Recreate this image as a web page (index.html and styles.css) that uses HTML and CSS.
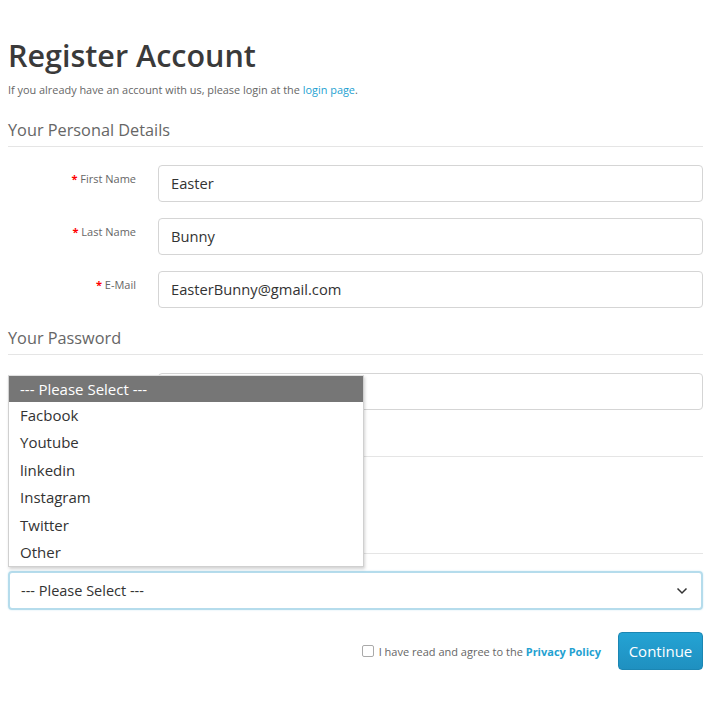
FILE: index.html
```html
<!DOCTYPE html>
<html>
<head>
<meta charset="utf-8">
<link rel="stylesheet" href="styles.css">
</head>
<body>
<div class="page">
  <h1 class="title">Register Account</h1>
  <p class="intro">If you already have an account with us, please login at the <a class="link" href="#">login page</a>.</p>

  <div class="legend legend-first">Your Personal Details</div>
  <div class="rows">
    <div class="row">
      <label class="label"><span class="req">*</span> First Name</label>
      <div class="input">Easter</div>
    </div>
    <div class="row">
      <label class="label"><span class="req">*</span> Last Name</label>
      <div class="input">Bunny</div>
    </div>
    <div class="row">
      <label class="label"><span class="req">*</span> E-Mail</label>
      <div class="input">EasterBunny@gmail.com</div>
    </div>
  </div>

  <div class="legend">Your Password</div>
  <div class="rows">
    <div class="row">
      <span class="label"></span>
      <div class="input"></div>
    </div>
  </div>

  <div class="legend legend-blank"></div>
  <div class="rows rows-sub"></div>

  <div class="legend legend-blank legend-last"></div>
  <div class="select-wrap">
    <div class="select">
      <span>--- Please Select ---</span>
      <svg class="chev" width="12" height="8" viewBox="0 0 12 8"><path d="M1.5 1.5 L6 6 L10.5 1.5" fill="none" stroke="#333" stroke-width="1.5"/></svg>
    </div>
  </div>

  <div class="actions">
    <span class="check"></span>
    <span class="agree">I have read and agree to the <b class="policy">Privacy Policy</b></span>
    <button class="btn">Continue</button>
  </div>

  <ul class="menu">
    <li class="opt opt-active">--- Please Select ---</li>
    <li class="opt">Facbook</li>
    <li class="opt">Youtube</li>
    <li class="opt">linkedin</li>
    <li class="opt">Instagram</li>
    <li class="opt">Twitter</li>
    <li class="opt">Other</li>
  </ul>
</div>
</body>
</html>
```

FILE: styles.css
```css
html, body {
  margin: 0;
  padding: 0;
  background: #fff;
}
body {
  font-family: "Open Sans", "DejaVu Sans", sans-serif;
  color: #666;
}
.page {
  position: relative;
  padding: 38px 7px 0 8px;
}
.title {
  margin: 0;
  font-size: 30.5px;
  line-height: 35px;
  font-weight: 600;
  color: #3a3a3a;
}
.intro {
  margin: 9px 0 0;
  font-size: 10.9px;
  line-height: 16px;
  color: #666;
}
.link {
  color: #23a1d1;
  text-decoration: none;
}
.legend {
  font-size: 16.3px;
  line-height: 24px;
  padding-bottom: 4px;
  border-bottom: 1px solid #e5e5e5;
  color: #666;
  margin-top: 18px;
}
.legend-blank {
  height: 24px;
}
.legend-first {
  margin-top: 20px;
}
.rows {
  display: flex;
  flex-direction: column;
  gap: 16px;
  margin-top: 18px;
}
.rows-sub {
  margin-top: 18px;
  height: 37px;
}
.row {
  display: grid;
  grid-template-columns: 128px 1fr;
  column-gap: 22px;
}
.label {
  text-align: right;
  font-size: 11px;
  line-height: 16px;
  padding-top: 6px;
  color: #666;
}
.req {
  color: #f00;
  font-weight: 700;
}
.input {
  height: 35px;
  border: 1px solid #d5d5d5;
  border-radius: 4px;
  padding: 0 12px;
  font-size: 14.7px;
  line-height: 35px;
  color: #333;
}
.legend-last {
  margin-top: 13px;
}
.select-wrap {
  margin-top: 17px;
}
.select {
  height: 35px;
  border: 2px solid #b5dcec;
  border-radius: 4px;
  box-shadow: 0 0 2px #cde8f3;
  display: flex;
  align-items: center;
  justify-content: space-between;
  padding: 0 12px 0 11px;
  font-size: 14.5px;
  color: #333;
}
.chev {
  display: block;
  margin-right: 1px;
}
.actions {
  display: flex;
  justify-content: flex-end;
  align-items: center;
  margin-top: 22px;
}
.check {
  width: 10px;
  height: 10px;
  border: 1px solid #aaa;
  border-radius: 2px;
  margin-right: 5px;
}
.agree {
  font-size: 11px;
  color: #666;
  margin-right: 17px;
}
.policy {
  color: #23a1d1;
  font-weight: 700;
}
.btn {
  font-family: "Open Sans", "DejaVu Sans", sans-serif;
  font-size: 15px;
  color: #fff;
  background: linear-gradient(#24a3d4, #1f90c0);
  border: 1px solid #1b86b3;
  border-radius: 4px;
  height: 38px;
  width: 85px;
  padding: 0;
}
.menu {
  position: absolute;
  left: 8px;
  top: 375px;
  width: 354px;
  margin: 0;
  padding: 0;
  list-style: none;
  background: #fff;
  border: 1px solid #d0d0d0;
  border-top-color: #e0e0e0;
  box-shadow: 1px 2px 3px rgba(0,0,0,0.18);
}
.opt {
  height: 27.4px;
  line-height: 27.4px;
  padding-left: 11px;
  font-size: 15px;
  color: #333;
}
.opt-active {
  background: #767676;
  color: #fff;
  height: 26px;
  line-height: 26px;
}
```
